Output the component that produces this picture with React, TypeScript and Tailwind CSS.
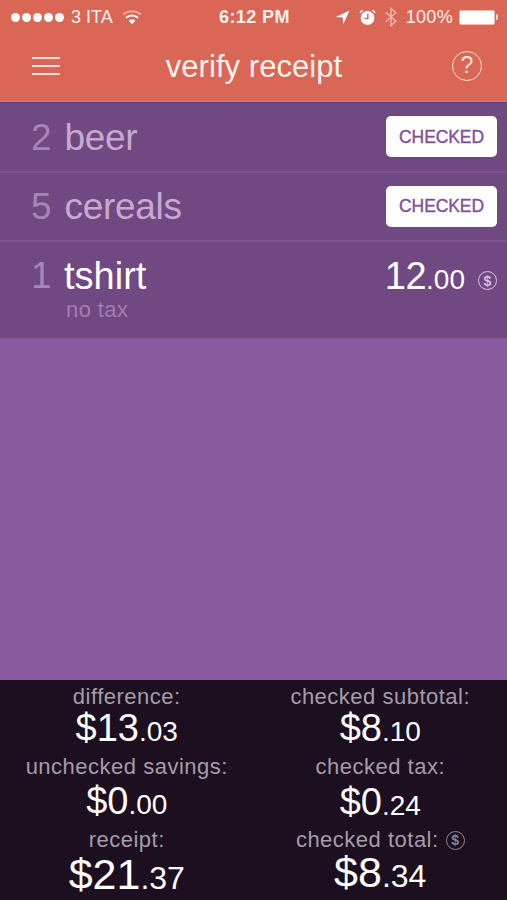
import React from "react";
import clsx from "clsx";

interface Item {
  qty: number;
  name: string;
}

interface Total {
  label: string;
  whole: string;
  cents: string;
  labelClass: string;
  valueClass: string;
  centsClass: string;
  taxed?: boolean;
}

const checkedItems: Item[] = [
  { qty: 2, name: "beer" },
  { qty: 5, name: "cereals" },
];

const leftTotals: Total[] = [
  {
    label: "difference:",
    whole: "$13",
    cents: ".03",
    labelClass: "mt-[2px]",
    valueClass: "text-[38px] leading-[32px]",
    centsClass: "text-[28px]",
  },
  {
    label: "unchecked savings:",
    whole: "$0",
    cents: ".00",
    labelClass: "mt-[6px]",
    valueClass: "text-[38px] leading-[39px]",
    centsClass: "text-[28px]",
  },
  {
    label: "receipt:",
    whole: "$21",
    cents: ".37",
    labelClass: "mt-[4px]",
    valueClass: "text-[43px] leading-[38px]",
    centsClass: "text-[32px]",
  },
];

const rightTotals: Total[] = [
  {
    label: "checked subtotal:",
    whole: "$8",
    cents: ".10",
    labelClass: "mt-[2px]",
    valueClass: "text-[38px] leading-[32px]",
    centsClass: "text-[28px]",
  },
  {
    label: "checked tax:",
    whole: "$0",
    cents: ".24",
    labelClass: "mt-[6px]",
    valueClass: "text-[38px] leading-[40px]",
    centsClass: "text-[28px]",
  },
  {
    label: "checked total:",
    whole: "$8",
    cents: ".34",
    labelClass: "mt-[3px]",
    valueClass: "text-[43px] leading-[35px]",
    centsClass: "text-[32px]",
    taxed: true,
  },
];

function DollarBadge({ className }: { className?: string }) {
  return (
    <span
      className={clsx(
        "flex h-[19px] w-[19px] shrink-0 items-center justify-center rounded-full border-[1.5px] border-current text-[14px] leading-none font-bold",
        className
      )}
    >
      $
    </span>
  );
}

function StatusBar() {
  return (
    <div className="flex h-[34px] items-center pl-[11px] pr-[9px] text-[18px] text-[#fff0ec]">
      <div className="flex w-[208px] items-center">
        <div className="flex gap-[2px]">
          {[0, 1, 2, 3, 4].map((dot) => (
            <span key={dot} className="h-[9px] w-[9px] rounded-full bg-white" />
          ))}
        </div>
        <span className="ml-[7px] whitespace-nowrap">3 ITA</span>
        <svg width="20" height="15" viewBox="0 0 20 15" fill="none" className="ml-[9px]">
          <path d="M1.2 4.6C6 0.1 14 0.1 18.8 4.6" stroke="#f1a898" strokeWidth="1.8" />
          <path d="M4 7.9C7.3 4.7 12.7 4.7 16 7.9" stroke="#fff" strokeWidth="2" />
          <path d="M6.6 10.8C8.5 9 11.5 9 13.4 10.8L10 14.2Z" fill="#fff" />
        </svg>
      </div>
      <span className="whitespace-nowrap text-[18px] font-bold tracking-[0.4px]">6:12 PM</span>
      <div className="ml-auto flex items-center">
        <svg width="15" height="15" viewBox="0 0 15 15" fill="#fff">
          <path d="M14.5 0.5L8.2 14.2L7.7 7.4L0.7 7.1Z" />
        </svg>
        <svg width="17" height="17" viewBox="0 0 17 17" fill="none" className="ml-[9px]">
          <circle cx="8.5" cy="9" r="6.9" fill="#fff" />
          <path d="M1.1 4C1.4 2.6 2.4 1.7 3.8 1.4M15.9 4C15.6 2.6 14.6 1.7 13.2 1.4" stroke="#fff" strokeWidth="1.4" />
          <path d="M8.8 4.8V9.4H5.4" stroke="#da6656" strokeWidth="1.5" />
        </svg>
        <svg width="12" height="20" viewBox="0 0 12 20" fill="none" className="ml-[9px]">
          <path d="M0.8 5.2L10.8 14.3L6 18.6V1.4L10.8 5.7L0.8 14.8" stroke="#f4b5a8" strokeWidth="1.4" />
        </svg>
        <span className="ml-[9px] tracking-[0.3px]">100%</span>
        <div className="ml-[6px] flex items-center">
          <span className="flex h-[15px] w-[36px] rounded-[2px] border-[1.5px] border-[#f6b9ae] bg-white" />
          <span className="ml-px h-[6px] w-[2px] rounded-r-full bg-[#fbdcd5]" />
        </div>
      </div>
    </div>
  );
}

function Header() {
  return (
    <header className="h-[102px] border-b border-[#ea715b] bg-[#da6656]">
      <StatusBar />
      <div className="flex h-[63px] items-center justify-between pr-[25px] pl-[32px]">
        <button type="button" aria-label="Menu" className="flex w-[28px] flex-col gap-[6px]">
          <span className="h-[2px] bg-[#ffe4dd]" />
          <span className="h-[2px] bg-[#ffe4dd]" />
          <span className="h-[2px] bg-[#ffe4dd]" />
        </button>
        <h1 className="mr-[4px] pt-[2px] text-[31px] leading-[36px] tracking-[0.05px] text-[#fff3ee]">
          verify receipt
        </h1>
        <button
          type="button"
          aria-label="Help"
          className="flex h-[30px] w-[30px] items-center justify-center rounded-full border-[1.5px] border-[#ffe4dd] text-[23px] leading-none text-[#ffe4dd]"
        >
          ?
        </button>
      </div>
    </header>
  );
}

function CheckedRow({ item }: { item: Item }) {
  return (
    <li className="flex h-[69.5px] items-center border-b-2 border-[#7d5394] pr-[10px] pl-[31px]">
      <span className="w-[33.5px] pt-[2px] text-[37px] leading-[40px] text-[#a684b5]">{item.qty}</span>
      <span className="pt-[2px] text-[37px] leading-[40px] tracking-[-0.3px] text-[#c7a9d0]">{item.name}</span>
      <button
        type="button"
        className="ml-auto h-[41px] w-[111px] rounded-[5px] bg-white text-[17.5px] tracking-[-0.1px] text-[#80519a] [-webkit-text-stroke:0.4px_#80519a]"
      >
        CHECKED
      </button>
    </li>
  );
}

function TotalsColumn({ totals }: { totals: Total[] }) {
  return (
    <div className="flex flex-1 flex-col items-center">
      {totals.map((total) => (
        <React.Fragment key={total.label}>
          <div
            className={clsx(
              "flex h-[30px] items-center text-[22px] leading-[30px] tracking-[0.5px] text-[#a49da8]",
              total.labelClass
            )}
          >
            {total.label}
            {total.taxed && <DollarBadge className="ml-[7px] text-[#8d8592] tracking-normal" />}
          </div>
          <div className={clsx("whitespace-nowrap text-white", total.valueClass)}>
            {total.whole}
            <span className={clsx("leading-none", total.centsClass)}>{total.cents}</span>
          </div>
        </React.Fragment>
      ))}
    </div>
  );
}

export default function App() {
  return (
    <main className="flex h-[900px] w-[507px] flex-col overflow-hidden bg-[#895a9f] font-['Liberation_Sans',Arial,sans-serif]">
      <Header />
      <ul className="h-[236px] border-t border-[#643f70] bg-[#704882]">
        {checkedItems.map((item) => (
          <CheckedRow key={item.name} item={item} />
        ))}
        <li className="flex items-start pt-[14px] pr-[10px] pl-[31px]">
          <span className="w-[33px] text-[37px] leading-[40px] text-[#a684b5]">1</span>
          <div>
            <div className="text-[38px] leading-[40px] text-white">tshirt</div>
            <div className="pl-[2px] text-[22px] leading-[28px] tracking-[0.4px] text-[#a17eb1]">no tax</div>
          </div>
          <div className="ml-auto flex items-center">
            <div className="text-[38px] leading-[40px] tracking-[-0.5px] text-white">
              12<span className="text-[28px] leading-none tracking-normal">.00</span>
            </div>
            <DollarBadge className="mt-[9px] ml-[13px] text-[#d9bfe0]" />
          </div>
        </li>
      </ul>
      <div className="flex-1" />
      <footer className="flex h-[220px] bg-[#1b0f20]">
        <TotalsColumn totals={leftTotals} />
        <TotalsColumn totals={rightTotals} />
      </footer>
    </main>
  );
}
